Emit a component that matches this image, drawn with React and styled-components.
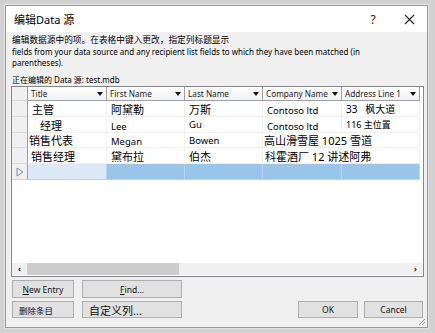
import React from "react";
import styled, { createGlobalStyle } from "styled-components";

const Global = createGlobalStyle`
  html, body { margin: 0; padding: 0; background: #d2d2d2; }
  body { font-family: "Noto Sans", "Noto Sans CJK SC", sans-serif; }
  * { box-sizing: border-box; }
`;

const Page = styled.div`
  width: 435px;
  height: 333px;
  padding: 5px 7px 5px 5px;
  background: #d2d2d2;
`;

const Dialog = styled.div`
  width: 423px;
  height: 323px;
  border: 1px solid #9a9a9a;
  background: #f0f0f0;
  display: flex;
  flex-direction: column;
  position: relative;
  box-shadow: 0 0 0 1px #e4e4e4;
`;

const TitleBar = styled.div`
  height: 26px;
  background: #ffffff;
  display: flex;
  align-items: center;
  padding-left: 8px;
  font-size: 11px;
  color: #000;
`;

const TitleText = styled.div`
  flex: 1;
`;

const TitleBtn = styled.div`
  width: ${(p) => p.$w}px;
  display: flex;
  justify-content: center;
  align-items: center;
  font-size: 12px;
  color: #222;
`;

const Body = styled.div`
  flex: 1;
  display: flex;
  flex-direction: column;
  padding: 2px 4px 0 5px;
`;

const Intro = styled.div`
  font-size: 8px;
  line-height: 11px;
  color: #000;
  padding-left: 1px;
`;

const IntroCJK = styled.span`
  font-size: 8.7px;
`;

const Editing = styled.div`
  font-size: 8px;
  line-height: 11px;
  margin-top: 6px;
  padding-left: 1px;
`;

const Grid = styled.div`
  margin-top: 1px;
  height: 191px;
  border: 1px solid #828790;
  background: #fff;
  display: flex;
  flex-direction: column;
  width: 413px;
`;

const Rows = styled.div`
  flex: 1;
`;

const Row = styled.div`
  display: flex;
  height: ${(p) => p.$h}px;
`;

const RowHead = styled.div`
  width: 16px;
  flex: none;
  background: #f0f0f0;
  border-right: 1px solid #a0a0a0;
  border-bottom: 1px solid #d7d7d7;
  display: flex;
  align-items: center;
  justify-content: center;
`;

const HeadCell = styled.div`
  width: ${(p) => p.$w}px;
  flex: none;
  background: linear-gradient(#ffffff, #f1f2f4);
  border-right: 1px solid #a0a0a0;
  border-bottom: 1px solid #a0a0a0;
  display: flex;
  align-items: center;
  gap: 2px;
  padding: 0 3px 0 3px;
  font-size: 8.2px;
  color: #1a1a1a;
  white-space: nowrap;
`;

const HeadLabel = styled.span`
  flex: 1;
`;

const Arrow = styled.span`
  flex: none;
  width: 0;
  height: 0;
  border-left: 3.5px solid transparent;
  border-right: 3.5px solid transparent;
  border-top: 4px solid #111;
`;

const Cell = styled.div`
  width: ${(p) => p.$w}px;
  flex: none;
  border-right: 1px solid ${(p) => (p.$sel ? "#b9d4ee" : "#f0f0f0")};
  border-bottom: 1px solid ${(p) => (p.$sel ? "#b9d4ee" : "#f0f0f0")};
  background: ${(p) => (p.$sel === "first" ? "#dde9f6" : p.$sel ? "#9ac5ea" : "#fff")};
  display: flex;
  align-items: center;
  padding-left: ${(p) => p.$pl ?? 4}px;
  padding-top: ${(p) => p.$pt ?? 0}px;
  font-size: ${(p) => p.$fs ?? 11}px;
  white-space: nowrap;
  overflow: hidden;
  color: #000;
`;

const Scrollbar = styled.div`
  height: 12px;
  background: #f0f0f0;
  display: flex;
  align-items: center;
  margin-bottom: 1px;
`;

const ScrollArrow = styled.div`
  width: 15px;
  flex: none;
  font-size: 9px;
  font-weight: bold;
  text-align: center;
  color: #333;
  line-height: 12px;
`;

const Track = styled.div`
  flex: 1;
  height: 12px;
  display: flex;
`;

const Thumb = styled.div`
  width: 152px;
  height: 12px;
  background: #cdcdcd;
`;

const Footer = styled.div`
  display: flex;
  flex-direction: column;
  gap: 3px;
  margin-top: 3px;
  padding-left: 1px;
`;

const BtnRow = styled.div`
  display: flex;
  align-items: center;
`;

const Button = styled.div`
  width: ${(p) => p.$w}px;
  height: ${(p) => p.$h ?? 17}px;
  margin-left: ${(p) => p.$ml ?? 0}px;
  border: 1px solid #adadad;
  background: #e1e1e1;
  display: flex;
  align-items: center;
  justify-content: ${(p) => (p.$left ? "flex-start" : "center")};
  padding-left: ${(p) => (p.$left ? p.$left : 0)}px;
  font-size: ${(p) => p.$fs ?? 8.5}px;
  color: #111;
  white-space: nowrap;
`;

const U = styled.span`
  text-decoration: underline;
`;

const Spacer = styled.div`
  flex: 1;
`;

const Grip = styled.svg`
  position: absolute;
  right: 1px;
  bottom: 1px;
`;

const cols = [79, 78, 78, 79, 78];
const heads = ["Title", "First Name", "Last Name", "Company Name", "Address Line 1"];

const data = [
  { h: 16, cells: [{ t: "主管" }, { t: "阿黛勒" }, { t: "万斯" }, { t: "Contoso ltd", fs: 9.5, pt: 3 }, { t: "33\u00a0\u00a0 枫大道", fs: 10 }] },
  { h: 16, cells: [{ t: "经理", pl: 12 }, { t: "Lee", fs: 9.5, pt: 3 }, { t: "Gu", fs: 9.5 }, { t: "Contoso ltd", fs: 9.5, pt: 3 }, { t: "116 主位置", fs: 9 }] },
  { h: 15, cells: [{ t: "销售代表", pl: 1 }, { t: "Megan", fs: 9.5, pt: 3 }, { t: "Bowen", fs: 9.5 }, { t: "高山滑雪屋 1025 雪道", pl: 1, span: 2 }, null] },
  { h: 16, cells: [{ t: "销售经理", pl: 3 }, { t: "黛布拉" }, { t: "伯杰" }, { t: "科霍酒厂 12 讲述阿弗", pl: 2, span: 2 }, null] },
];

export default function App() {
  return (
    <>
      <Global />
      <Page>
        <Dialog>
          <TitleBar>
            <TitleText>编辑Data 源</TitleText>
            <TitleBtn $w={36}>?</TitleBtn>
            <TitleBtn $w={36}>
              <svg width="11" height="11" viewBox="0 0 11 11">
                <path d="M1 1L10 10M10 1L1 10" stroke="#222" strokeWidth="1.1" />
              </svg>
            </TitleBtn>
          </TitleBar>
          <Body>
            <Intro>
              <IntroCJK>编辑数据源中的项。在表格中键入更改，指定列标题显示</IntroCJK>
              <br />
              fields from your data source and any recipient list fields to which they have been matched (in
              <br />
              parentheses).
            </Intro>
            <Editing>正在编辑的 Data 源: test.mdb</Editing>
            <Grid>
              <Rows>
                <Row $h={14}>
                  <RowHead />
                  {heads.map((h, i) => (
                    <HeadCell key={h} $w={cols[i]}>
                      <HeadLabel>{h}</HeadLabel>
                      <Arrow />
                    </HeadCell>
                  ))}
                </Row>
                {data.map((r, ri) => (
                  <Row key={ri} $h={r.h}>
                    <RowHead />
                    {r.cells.map((c, ci) =>
                      c === null ? null : (
                        <Cell
                          key={ci}
                          $w={c.span ? cols[ci] + cols[ci + 1] : cols[ci]}
                          $fs={c.fs}
                          $pl={c.pl}
                          $pt={c.pt}
                        >
                          {c.t}
                        </Cell>
                      )
                    )}
                  </Row>
                ))}
                <Row $h={16}>
                  <RowHead>
                    <svg width="8" height="10" viewBox="0 0 8 10">
                      <path d="M1 1L7 5L1 9Z" fill="none" stroke="#7a8ea8" strokeWidth="1" />
                    </svg>
                  </RowHead>
                  {cols.map((w, i) => (
                    <Cell key={i} $w={w} $sel={i === 0 ? "first" : "rest"} />
                  ))}
                </Row>
              </Rows>
              <Scrollbar>
                <ScrollArrow>‹</ScrollArrow>
                <Track>
                  <Thumb />
                </Track>
                <ScrollArrow>›</ScrollArrow>
              </Scrollbar>
            </Grid>
            <Footer>
              <BtnRow>
                <Button $w={62} $h={18}>
                  <U>N</U>ew Entry
                </Button>
                <Button $w={100} $h={18} $ml={8}>
                  <U>F</U>ind...
                </Button>
              </BtnRow>
              <BtnRow>
                <Button $w={62} $left={6}>删除条目</Button>
                <Button $w={100} $ml={8} $left={6} $fs={11}>
                  自定义列...
                </Button>
                <Spacer />
                <Button $w={60}>OK</Button>
                <Button $w={59} $ml={6}>
                  Cancel
                </Button>
              </BtnRow>
            </Footer>
          </Body>
          <Grip width="8" height="8" viewBox="0 0 8 8">
            <path d="M7 1L1 7M7 4L4 7" stroke="#9a9a9a" strokeWidth="1" />
          </Grip>
        </Dialog>
      </Page>
    </>
  );
}
